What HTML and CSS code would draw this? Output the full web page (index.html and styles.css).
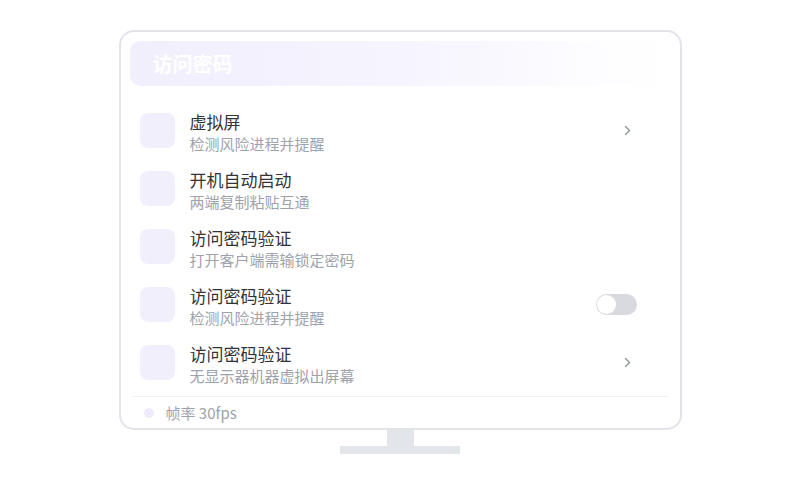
FILE: index.html
```html
<!DOCTYPE html>
<html lang="zh">
<head>
<meta charset="utf-8">
<link rel="stylesheet" href="styles.css">
</head>
<body>
<div class="stage">
  <div class="monitor">
    <div class="header"><span class="header-title">访问密码</span></div>
    <div class="list">
      <div class="row">
        <div class="icon"></div>
        <div class="text"><div class="title">虚拟屏</div><div class="sub">检测风险进程并提醒</div></div>
        <div class="ctrl"><svg class="chev" width="7" height="11" viewBox="0 0 7 11"><path d="M1.5 1.5 L5.5 5.5 L1.5 9.5" fill="none" stroke="#8e939b" stroke-width="1.4" stroke-linecap="round" stroke-linejoin="round"/></svg></div>
      </div>
      <div class="row">
        <div class="icon"></div>
        <div class="text"><div class="title">开机自动启动</div><div class="sub">两端复制粘贴互通</div></div>
      </div>
      <div class="row">
        <div class="icon"></div>
        <div class="text"><div class="title">访问密码验证</div><div class="sub">打开客户端需输锁定密码</div></div>
      </div>
      <div class="row">
        <div class="icon"></div>
        <div class="text"><div class="title">访问密码验证</div><div class="sub">检测风险进程并提醒</div></div>
        <div class="ctrl"><div class="toggle"><div class="knob"></div></div></div>
      </div>
      <div class="row">
        <div class="icon"></div>
        <div class="text"><div class="title">访问密码验证</div><div class="sub">无显示器机器虚拟出屏幕</div></div>
        <div class="ctrl"><svg class="chev" width="7" height="11" viewBox="0 0 7 11"><path d="M1.5 1.5 L5.5 5.5 L1.5 9.5" fill="none" stroke="#8e939b" stroke-width="1.4" stroke-linecap="round" stroke-linejoin="round"/></svg></div>
      </div>
    </div>
    <div class="footer"><span class="dot"></span><span class="fps">帧率 30fps</span></div>
  </div>
  <div class="neck"></div>
  <div class="base"></div>
</div>
</body>
</html>
```
FILE: styles.css
```css
html, body {
  margin: 0;
  padding: 0;
  background: #ffffff;
  font-family: "Noto Sans CJK SC", "Noto Sans", sans-serif;
}
.stage {
  display: flex;
  flex-direction: column;
  align-items: center;
  padding-top: 30px;
}
.monitor {
  width: 563px;
  box-sizing: border-box;
  border: 2px solid #e3e4ea;
  border-radius: 15px;
  padding: 9px 8px 0 9px;
  display: flex;
  flex-direction: column;
  background: #fff;
  flex: none;
}
.header {
  height: 45px;
  flex: none;
  border-radius: 10px;
  background: linear-gradient(90deg, #f2effd 0%, #f6f4fe 50%, #fdfcff 85%, #ffffff 100%);
  display: flex;
  align-items: center;
  padding-left: 23px;
}
.header-title {
  color: #ffffff;
  font-size: 20px;
  font-weight: 700;
  line-height: 24px;
}
.list {
  padding: 24px 35px 0 10px;
  display: flex;
  flex-direction: column;
  gap: 14px;
  flex: none;
}
.row {
  height: 44px;
  display: flex;
  align-items: flex-start;
  flex: none;
}
.icon {
  width: 35px;
  height: 35px;
  border-radius: 8px;
  background: #f2effd;
  margin-top: 3px;
  flex: none;
}
.text {
  margin-left: 15px;
  flex: 1;
}
.title {
  font-size: 17px;
  line-height: 24px;
  color: #333438;
}
.sub {
  font-size: 15px;
  line-height: 20px;
  color: #9ea3ab;
}
.ctrl {
  height: 35px;
  margin-top: 3px;
  display: flex;
  align-items: center;
}
.chev {
  margin-right: 6px;
  display: block;
}
.toggle {
  width: 41px;
  height: 21px;
  border-radius: 11px;
  background: #d8dae0;
  position: relative;
}
.knob {
  position: absolute;
  left: 1px;
  top: 1px;
  width: 19px;
  height: 19px;
  border-radius: 50%;
  background: #fff;
}
.footer {
  margin: 10px 3px 0 2px;
  border-top: 1px solid #eef0f3;
  height: 31px;
  flex: none;
  display: flex;
  align-items: center;
  padding-left: 12px;
}
.dot {
  width: 10px;
  height: 10px;
  border-radius: 50%;
  background: #efebfd;
}
.fps {
  margin-left: 12px;
  font-size: 15px;
  color: #9ea3ab;
}
.neck {
  width: 27px;
  height: 16px;
  background: #e2e5ea;
}
.base {
  width: 120px;
  height: 8px;
  background: #e2e5ea;
}
```
